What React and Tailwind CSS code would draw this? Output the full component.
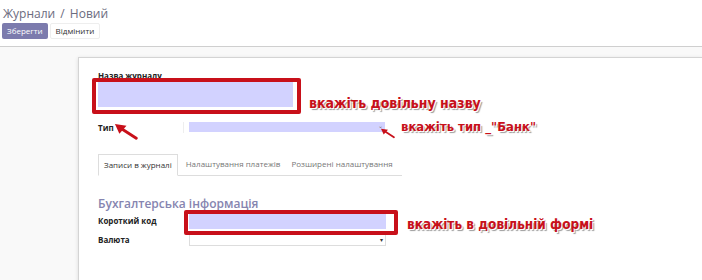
import React from 'react';

const Arrow = ({ className }) => (
  <svg className={className} viewBox="0 0 26 18" fill="none">
    <path d="M24 16 L7 5" stroke="#c8101a" strokeWidth="3.2" strokeLinecap="round" />
    <path d="M0 0 L13 2 L5 11 Z" fill="#c8101a" />
  </svg>
);

const Note = ({ children, className }) => (
  <div
    className={`absolute whitespace-nowrap font-bold text-[#c8101a] leading-none [font-family:'DejaVu_Sans_Condensed','DejaVu_Sans',sans-serif] [text-shadow:1px_1px_0_#fff,2px_2px_1px_#9a9a9a] ${className}`}
  >
    {children}
  </div>
);

export default function App() {
  return (
    <div className="w-[702px] h-[280px] overflow-hidden bg-white [font-family:'Open_Sans',sans-serif] text-[#333]">
      {/* Control panel */}
      <div className="border-b border-[#cfcfcf] px-[2px] pt-[6px] pb-[7px]">
        <div className="text-[12px] leading-[16px] text-[#6b6b7e] pl-[1px]">
          Журнали <span className="mx-[2px]">/</span> Новий
        </div>
        <div className="flex gap-[2px] mt-[1px]">
          <button className="bg-[#7c7bad] text-white text-[8px] px-[5px] h-[16px] rounded-[2px]">Зберегти</button>
          <button className="bg-white text-[#333] text-[8px] px-[5px] h-[16px] border border-[#eee] rounded-[2px]">Відмінити</button>
        </div>
      </div>

      {/* Form view */}
      <div className="bg-[#f9f9f9] h-full pl-[78px] pt-[10px]">
        <div className="relative bg-white h-[240px] border-l border-t border-[#d4d4d4] shadow-[0_1px_4px_rgba(0,0,0,0.12)] pl-[19px] pt-[13px]">
          <div className="text-[8px] font-bold leading-[10px] text-[#222]">Назва журналу</div>
          <div className="w-[195px] h-[25px] bg-[#d2d2ff] mt-[1px]" />

          <div className="flex mt-[15px] h-[11px]">
            <div className="w-[86px] text-[8px] font-bold leading-[11px] text-[#222] border-r border-[#eee]">Тип</div>
            <div className="relative ml-[5px] w-[196px] h-[10px] bg-[#d2d2ff]">
              <span className="absolute right-[2px] top-[1px] text-[6px] leading-none text-[#777]">⌄</span>
            </div>
          </div>

          {/* Tabs */}
          <div className="flex mt-[21px] mr-[300px] border-b border-[#ddd] text-[8px] leading-[20px]">
            <div className="px-[5px] border border-[#ddd] border-b-white -mb-px bg-white text-[#333]">Записи в журналі</div>
            <div className="px-[8px] text-[#777]">Налаштування платежів</div>
            <div className="px-[3px] text-[#777]">Розширені налаштування</div>
          </div>

          <div className="mt-[20px] text-[12px] font-semibold leading-[15px] text-[#8685b0]">Бухгалтерська інформація</div>
          <div className="flex items-center mt-[2px] h-[16px]">
            <div className="w-[86px] text-[8px] font-bold text-[#222]">Короткий код</div>
            <div className="ml-[5px] w-[197px] h-[16px] bg-[#d2d2ff]" />
          </div>
          <div className="flex items-center mt-[5px] h-[12px]">
            <div className="w-[86px] text-[8px] font-bold text-[#222]">Валюта</div>
            <div className="relative ml-[5px] w-[197px] h-[12px] border border-[#ddd]">
              <span className="absolute right-[2px] top-[2px] text-[6px] leading-none text-[#333]">▾</span>
            </div>
          </div>

          {/* Annotations */}
          <div className="absolute left-[13px] top-[20px] w-[209px] h-[36px] border-[4px] border-[#c8101a] rounded-[2px]" />
          <div className="absolute left-[105px] top-[152px] w-[214px] h-[25px] border-[4px] border-[#c8101a] rounded-[2px]" />
          <Arrow className="absolute left-[35px] top-[66px] w-[25px] h-[16px]" />
          <Arrow className="absolute left-[302px] top-[68px] w-[14px] h-[15px]" />
          <Note className="left-[230px] top-[38px] text-[14px]">вкажіть довільну назву</Note>
          <Note className="left-[322px] top-[62px] text-[13px]">вкажіть тип _"Банк"</Note>
          <Note className="left-[328px] top-[160px] text-[13.5px]">вкажіть в довільній формі</Note>
        </div>
      </div>
    </div>
  );
}
